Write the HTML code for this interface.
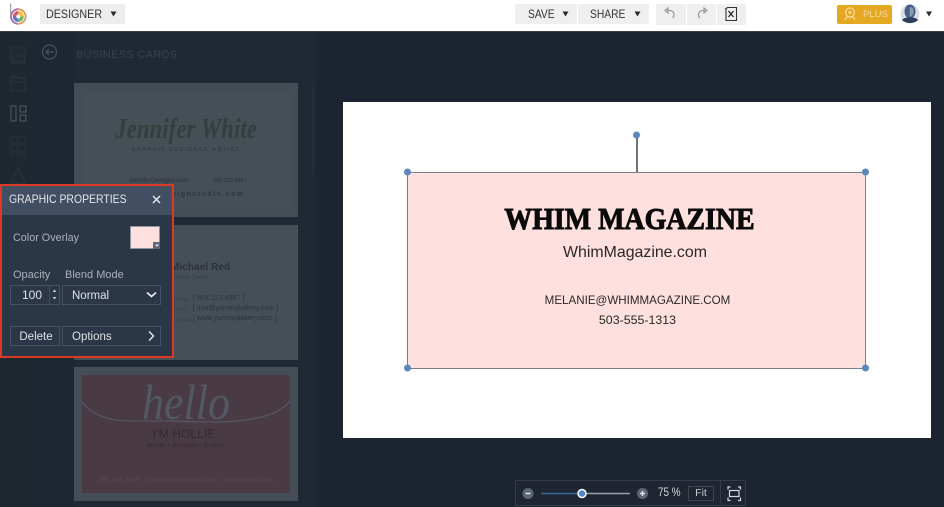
<!DOCTYPE html>
<html><head><meta charset="utf-8">
<style>
*{box-sizing:border-box}
html,body{margin:0;padding:0;width:944px;height:507px;overflow:hidden;background:#1c2431;font-family:"Liberation Sans",sans-serif}
.a{position:absolute;white-space:nowrap}
.c{text-align:center}
svg{position:absolute;left:0;top:0}
</style></head><body>
<div class="a" style="left:0;top:31px;width:944px;height:476px;background:#1c2431"></div>
<div class="a" style="left:0;top:31px;width:316px;height:476px;background:#1f2833"></div>
<div class="a" style="left:0;top:31px;width:33px;height:476px;background:#1d2831"></div>
<div class="a" style="left:33px;top:31px;width:41px;height:476px;background:#1d2731"></div>

<!-- top bar -->
<div class="a" style="left:0;top:0;width:944px;height:32px;background:#fff;border-bottom:1px solid #3a3f47"></div>
<div class="a" style="left:40px;top:4px;width:85px;height:20px;background:#ededed"></div>
<div class="a" style="left:46px;top:6px;font-size:11.800px;line-height:16px;color:#333;transform:scaleX(.91);transform-origin:left">DESIGNER</div>
<div class="a" style="left:515px;top:4px;width:134px;height:20px;background:#efefef"></div>
<div class="a" style="left:577px;top:4px;width:1px;height:20px;background:#fff"></div>
<div class="a" style="left:528px;top:6px;font-size:11.800px;line-height:16px;color:#333;transform:scaleX(.87);transform-origin:left">SAVE</div>
<div class="a" style="left:590px;top:6px;font-size:11.800px;line-height:16px;color:#333;transform:scaleX(.87);transform-origin:left">SHARE</div>
<div class="a" style="left:656px;top:4px;width:90px;height:21px;background:#efefef"></div>
<div class="a" style="left:686px;top:4px;width:1px;height:21px;background:#fff"></div>
<div class="a" style="left:716px;top:4px;width:1px;height:21px;background:#fff"></div>
<div class="a" style="left:837px;top:5px;width:55px;height:19px;background:#e5a823;border-radius:2px"></div>
<div class="a" style="left:863px;top:8px;font-size:9.500px;line-height:13px;color:#f7dc99">PLUS</div>

<!-- sidebar header -->
<div class="a" style="left:76px;top:47px;font-size:11px;line-height:16px;color:#38424d;letter-spacing:.3px">BUSINESS CARDS</div>

<!-- card 1 -->
<div class="a" style="left:74px;top:83px;width:224px;height:134px;background:#444c56"></div>
<div class="a" style="left:82px;top:91px;width:208px;height:118px;background:#464e56"></div>
<div class="a c" style="left:74px;top:112px;width:224px;font-family:'Liberation Serif',serif;font-style:italic;font-weight:bold;font-size:28px;line-height:36px;color:#333f3c;transform:scaleX(.82)">Jennifer White</div>
<div class="a c" style="left:74px;top:146px;width:224px;font-size:5px;line-height:8px;color:#343b40;letter-spacing:1.700px;font-weight:bold">GRAPHIC DESIGNER.ARTIST</div>
<div class="a" style="left:128px;top:177px;font-size:6.500px;line-height:8px;color:#2c3238">JenniferDesigns.com</div>
<div class="a" style="left:213px;top:177px;font-size:5.500px;line-height:8px;color:#2c3238">555.123.4567</div>
<div class="a" style="left:172px;top:190px;font-size:7px;line-height:9px;color:#2f363c;letter-spacing:1.500px;font-weight:bold">signstudio.com</div>

<!-- card 2 -->
<div class="a" style="left:74px;top:225px;width:224px;height:135px;background:#464e57"></div>
<div class="a" style="left:171px;top:262px;font-size:9.800px;line-height:12px;color:#2b323a;font-weight:bold;letter-spacing:.2px">Michael Red</div>
<div class="a" style="left:171px;top:274px;font-size:6px;line-height:9px;color:#373e47">Bakery Owner</div>
<div class="a" style="left:174px;top:295px;font-size:5px;line-height:10px;color:#3a424c">Phone<br>Email<br>Website</div>
<div class="a" style="left:193px;top:294px;font-size:6.900px;line-height:10px;color:#2b323a;letter-spacing:.1px">[ 503.123.4567 ]<br>[ Jon@yummybakery.com ]<br>[ www.yummybakery.com ]</div>

<!-- card 3 -->
<div class="a" style="left:74px;top:367px;width:224px;height:134px;background:#454e57"></div>
<div class="a" style="left:82px;top:375px;width:208px;height:118px;background:#4a3a43"></div>
<div class="a c" style="left:82px;top:372px;width:208px;font-family:'Liberation Serif',serif;font-style:italic;font-size:50px;line-height:60px;color:#525963;transform:scaleX(.88)">hello</div>
<div class="a c" style="left:74px;top:428px;width:224px;font-size:11.500px;line-height:14px;color:#2d2b35;letter-spacing:.4px">I'M HOLLIE.</div>
<div class="a c" style="left:74px;top:441px;width:224px;font-size:6.500px;line-height:9px;color:#2f2d37;letter-spacing:.3px">Writer • Blogger • Crafter</div>
<div class="a c" style="left:74px;top:477px;width:224px;font-size:6px;line-height:8px;color:#584c56;letter-spacing:.4px">555.555.5555 &nbsp; holliewrites@email.com &nbsp; holliewrites.com</div>

<!-- canvas -->
<div class="a" style="left:343px;top:102px;width:588px;height:336px;background:#fff"></div>
<div class="a" style="left:407px;top:172px;width:459px;height:197px;background:#fee0df;border:1.500px solid #7a7f88"></div>
<div class="a" style="left:636px;top:135px;width:1.500px;height:37px;background:#70757d"></div>
<div class="a c" style="left:400px;top:200px;width:459px;font-family:'Liberation Serif',serif;font-weight:bold;font-size:31px;line-height:38px;color:#0b0a0a;-webkit-text-stroke:1px #0b0a0a;transform:scaleX(.9)">WHIM MAGAZINE</div>
<div class="a c" style="left:407px;top:243px;width:456px;font-size:15.900px;line-height:20px;color:#2b2728">WhimMagazine.com</div>
<div class="a c" style="left:407px;top:293px;width:461px;font-size:11.600px;line-height:15px;color:#2b2728">MELANIE@WHIMMAGAZINE.COM</div>
<div class="a c" style="left:407px;top:312px;width:461px;font-size:12.400px;line-height:16px;color:#2b2728">503-555-1313</div>

<!-- properties panel -->
<div class="a" style="left:0;top:184px;width:174px;height:174px;background:#2b3647;border:2.500px solid #dc3a22"></div>
<div class="a" style="left:2px;top:186px;width:170px;height:29px;background:#424f63"></div>
<div class="a" style="left:9px;top:191px;font-size:12px;line-height:16px;color:#e3e6ea;transform:scaleX(.87);transform-origin:left">GRAPHIC PROPERTIES</div>
<div class="a" style="left:13px;top:231px;font-size:10.800px;line-height:15px;color:#aab0b9">Color Overlay</div>
<div class="a" style="left:130px;top:226px;width:30px;height:23px;background:#fee0df;border:1px solid #8c94a1"></div>
<div class="a" style="left:153px;top:242px;width:7px;height:7px;background:#5d6878"></div>
<div class="a" style="left:13px;top:268px;font-size:11px;line-height:15px;color:#aab0b9">Opacity</div>
<div class="a" style="left:65px;top:268px;font-size:11px;line-height:15px;color:#aab0b9">Blend Mode</div>
<div class="a" style="left:10px;top:285px;width:50px;height:20px;border:1px solid #465264"></div>
<div class="a" style="left:49px;top:285px;width:11px;height:20px;border:1px solid #465264"></div>
<div class="a" style="left:22px;top:287px;font-size:12px;line-height:16px;color:#dfe2e6">100</div>
<div class="a" style="left:62px;top:285px;width:99px;height:20px;border:1px solid #465264"></div>
<div class="a" style="left:72px;top:288px;font-size:11.500px;line-height:16px;color:#dfe2e6">Normal</div>
<div class="a" style="left:10px;top:326px;width:50px;height:20px;border:1px solid #465264"></div>
<div class="a c" style="left:11px;top:329px;width:50px;font-size:11.500px;line-height:16px;color:#dfe2e6">Delete</div>
<div class="a" style="left:62px;top:326px;width:99px;height:20px;border:1px solid #465264"></div>
<div class="a" style="left:72px;top:329px;font-size:11.500px;line-height:16px;color:#dfe2e6">Options</div>

<!-- zoom bar -->
<div class="a" style="left:515px;top:480px;width:231px;height:26px;background:#1f2632;border:1px solid #343c49"></div>
<div class="a" style="left:720px;top:480px;width:1px;height:26px;background:#343c49"></div>
<div class="a" style="left:688px;top:486px;width:26px;height:15px;border:1px solid #3d4552"></div>
<div class="a c" style="left:688px;top:486px;width:26px;font-size:10.500px;line-height:15px;color:#c6cad0">Fit</div>
<div class="a" style="left:658px;top:486px;font-size:11.500px;line-height:15px;color:#d5d8dc;transform:scaleX(.86);transform-origin:left">75 %</div>

<svg width="944" height="507" viewBox="0 0 944 507" fill="none">
 <!-- logo -->
 <path d="M10.700 3.500V17" stroke="#8f8a96" stroke-width="1"/>
 <path d="M18.300 9.200A7.300 7.300 0 0 0 18.300 23.800" stroke="#a36cae" stroke-width="1.800"/>
 <path d="M18.300 9.200A7.300 7.300 0 0 1 18.300 23.800" stroke="#e29a4e" stroke-width="1.800"/>
 <path d="M18.300 11V16.500H23.800A5.500 5.500 0 0 0 18.300 11Z" fill="#f2c13c"/>
 <path d="M23.800 16.500H18.300V22A5.500 5.500 0 0 0 23.800 16.500Z" fill="#63b96b"/>
 <path d="M18.300 22V16.500H12.800A5.500 5.500 0 0 0 18.300 22Z" fill="#5d77c6"/>
 <path d="M12.800 16.500H18.300V11A5.500 5.500 0 0 0 12.800 16.500Z" fill="#dd5a64"/>
 <circle cx="18.300" cy="16.500" r="2" fill="#fff"/>
 <!-- caret triangles -->
 <path d="M110.500 11.500h6l-3 5z M562.500 11.500h6l-3 5z M634.500 11.500h6l-3 5z M926 11.500h6l-3 5z" fill="#2a2a2a"/>
 <!-- undo redo -->
 <path d="M665 10.500l3-2.500v5zM667 10.500h3a4 4 0 0 1 4 4v.5a4 4 0 0 1-1.500 3" stroke="#9a9a9a" stroke-width="1.200"/>
 <path d="M707 10.500l-3-2.500v5zM705 10.500h-2.500a4 4 0 0 0-4 4v.5a4 4 0 0 0 1.500 3" stroke="#9a9a9a" stroke-width="1.200"/>
 <!-- close doc -->
 <path d="M725.500 9l2-1.500h9V20.500h-10.500V9.500z" stroke="#333" stroke-width="1.100"/>
 <path d="M728.500 11l5 6m0-6l-5 6" stroke="#222" stroke-width="1.300"/>
 <!-- plus icon -->
 <circle cx="850" cy="12.500" r="4.500" stroke="#f7dc99" stroke-width="1.200"/>
 <path d="M850 10.500v4M848 12.500h4M845.500 20c0-2 1-3 2.500-3h4c1.500 0 2.500 1 2.500 3" stroke="#f7dc99" stroke-width="1.200"/>
 <!-- avatar -->
 <circle cx="910" cy="14" r="9.500" fill="#d9dde4"/>
 <ellipse cx="910" cy="11.500" rx="5.500" ry="7" fill="#47608a"/>
 <path d="M902 20c2-3.500 14-3.500 16 0c-4 4-12 4-16 0z" fill="#2e3f5e"/>
 <path d="M910 7c2.500 0 4 2 3.500 5s-2 5-4 4.500z" fill="#8c9ab4"/>
 <!-- rail icons -->
 <g stroke="#2a3440" stroke-width="1">
  <path d="M11 47h14v14H11zM10 63h16M12 59l4-5 3 3 3-4 3 6"/>
  <path d="M11 78h14v13H11zM11 82h14M11 78v-2h6v2"/>
  <path d="M11 137h6v6h-6zM19 137h6v6h-6zM11 145h6v6h-6zM19 145h6v6h-6zM11 153h6v3h-6zM19 153h6v3h-6z" stroke="#27313c"/>
  <path d="M11 183l7-15 7 15z"/>
 </g>
 <g stroke="#46515c" stroke-width="1.200">
  <path d="M11 106h5v15h-5zM20 106h6v6h-6zM20 115h6v6h-6z"/>
 </g>
 <!-- back -->
 <circle cx="49.500" cy="52" r="7" stroke="#47525d" stroke-width="1.200"/>
 <path d="M54 52h-8m3-3l-3 3 3 3" stroke="#47525d" stroke-width="1.200"/>
 <!-- scrollbar -->
 <path d="M313 86v88" stroke="#232c37" stroke-width="3"/>
 <!-- hello swash -->
 <path d="M82 402c10 14 28 19 50 19c14 0 24 0 34 0c22 0 26 1 46 1c26 0 65-3 78-21" stroke="#525963" stroke-width="1.300"/>
 <!-- panel close -->
 <path d="M153 196l7 7m0-7l-7 7" stroke="#e8eaee" stroke-width="1.400"/>
 <path d="M155 244.500h4l-2 2.500z" fill="#dde"/>
 <path d="M52.500 292l2-2.500 2 2.500zM52.500 297l2 2.500 2-2.500z" fill="#c5cad2"/>
 <path d="M147 292.500l4.500 4 4.500-4" stroke="#eceef1" stroke-width="1.600"/>
 <path d="M149 331.500l4.500 4.500-4.500 4.500" stroke="#dfe2e6" stroke-width="1.500"/>
 <!-- handles -->
 <g fill="#5b88b8">
  <circle cx="636.500" cy="135" r="3.500"/>
  <circle cx="407.500" cy="172" r="3.500"/>
  <circle cx="865.500" cy="172" r="3.500"/>
  <circle cx="407.500" cy="368" r="3.500"/>
  <circle cx="865.500" cy="368" r="3.500"/>
 </g>
 <!-- zoom controls -->
 <circle cx="528" cy="493.500" r="5.500" fill="#5c6675"/>
 <path d="M525.500 493.500h5" stroke="#e0e3e7" stroke-width="1.500"/>
 <circle cx="642.500" cy="493.500" r="5.500" fill="#5c6675"/>
 <path d="M640 493.500h5M642.500 491v5" stroke="#e0e3e7" stroke-width="1.500"/>
 <path d="M541 493.500h41" stroke="#33659f" stroke-width="1.500"/>
 <path d="M582 493.500h48" stroke="#9a9ea5" stroke-width="1.500"/>
 <circle cx="582" cy="493.500" r="4" fill="#4f86c6" stroke="#fff" stroke-width="1.500"/>
 <path d="M728 489.500v-2.500h2.500M738 487h2.500v2.500M740.500 497.500v3H738M730.500 500.500H728v-3" stroke="#d6d9dd" stroke-width="1.200"/>
 <rect x="729.500" y="490.500" width="9.500" height="6" stroke="#d6d9dd" stroke-width="1.200"/>
</svg>
</body></html>
